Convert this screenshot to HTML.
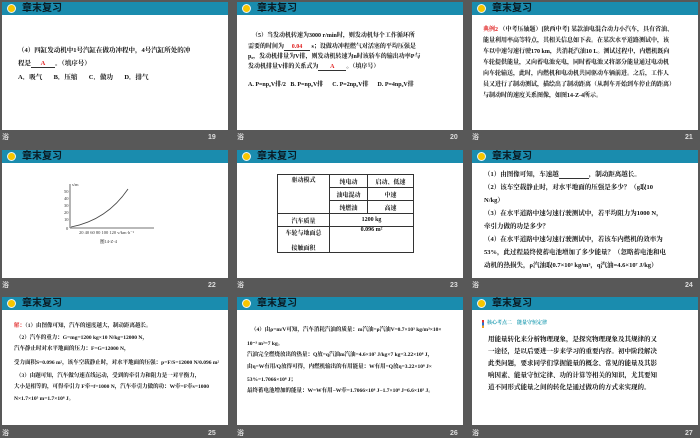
<!DOCTYPE html>
<html><head><meta charset="utf-8"><style>
*{margin:0;padding:0;box-sizing:border-box}
body{width:700px;height:438px;background:#585858;position:relative;overflow:hidden;font-family:"Liberation Serif","Noto Serif CJK SC","Noto Sans CJK SC",serif;color:#111}
.s{position:absolute;width:226px;height:128px;background:#fff;overflow:hidden}
.h{position:absolute;left:0;top:0;width:100%;height:13px;background:#1a8cae}
.h i{position:absolute;left:5px;top:2px;width:9px;height:9px;border-radius:50%;background:#f7c600;border:1px solid #e8f4f8}
.h b{position:absolute;left:20px;top:0px;font:bold 10px/13px "Liberation Sans","Noto Sans CJK SC",sans-serif;color:#0a1a22}
.t{position:absolute;font-weight:bold;font-size:6px;line-height:6px;white-space:nowrap}
.l{position:absolute;color:#ddd;font:bold 7px/8px "Liberation Sans","Noto Sans CJK SC",sans-serif}
.r{color:#e02020}
.u{display:inline-block;border-bottom:0.6px solid #333;text-align:center}
table{position:absolute;border-collapse:collapse;font-weight:bold;font-size:6px}
td{border:0.8px solid #333;text-align:center;height:13px;padding:0 2px}
</style></head><body>

<!-- 19 -->
<div class="s" style="left:2px;top:2px"><div class="h"><i></i><b>章末复习</b></div>
<div class="t" style="left:16px;top:46px;font-size:6.5px">（4）四缸发动机中1号汽缸在做功冲程中，4号汽缸所处的冲</div>
<div class="t" style="left:16px;top:59px;font-size:6.5px">程是<span class="u r" style="width:24px">A</span>。（填序号）</div>
<div class="t" style="left:16px;top:73px;font-size:6.5px">A．吸气&nbsp;&nbsp;&nbsp;&nbsp;&nbsp;&nbsp;&nbsp;B．压缩&nbsp;&nbsp;&nbsp;&nbsp;&nbsp;&nbsp;&nbsp;C．做功&nbsp;&nbsp;&nbsp;&nbsp;&nbsp;&nbsp;&nbsp;D．排气</div>
</div>
<div class="l" style="left:2px;top:134px">浴</div><div class="l" style="left:208px;top:134px">19</div>

<!-- 20 -->
<div class="s" style="left:237px;top:2px"><div class="h"><i></i><b>章末复习</b></div>
<div class="t" style="left:15px;top:31px">（5）当发动机转速为3000 r/min时，则发动机每个工作循环所</div>
<div class="t" style="left:11px;top:42px">需要的时间为<span class="u r" style="width:26px">0.04</span> s；设做功冲程燃气对活塞的平均压强是</div>
<div class="t" style="left:11px;top:52px">p₀，发动机排量为V排，则发动机转速为n时该轿车的输出功率P与</div>
<div class="t" style="left:11px;top:62px">发动机排量V排的关系式为<span class="u r" style="width:28px">A</span>。（填序号）</div>
<div class="t" style="left:11px;top:80px">A. P=np₀V排/2&nbsp;&nbsp;&nbsp;B. P=np₀V排&nbsp;&nbsp;&nbsp;&nbsp;&nbsp;&nbsp;C. P=2np₀V排&nbsp;&nbsp;&nbsp;&nbsp;&nbsp;&nbsp;D. P=4np₀V排</div>
</div>
<div class="l" style="left:237px;top:134px">浴</div><div class="l" style="left:450px;top:134px">20</div>

<!-- 21 -->
<div class="s" style="left:472px;top:2px"><div class="h"><i></i><b>章末复习</b></div>
<div class="t" style="left:11px;top:25px"><span class="r">典例2</span> （中考压轴题）[陕西中考] 某款油电混合动力小汽车，具有省油、</div>
<div class="t" style="left:11px;top:36px">能量利用率高等特点，其相关信息如下表。在某次水平道路测试中，该</div>
<div class="t" style="left:11px;top:47px">车以中速匀速行驶170 km，共消耗汽油10 L。测试过程中，内燃机既向</div>
<div class="t" style="left:11px;top:58px">车轮提供能量，又向蓄电池充电，同时蓄电池又将部分能量通过电动机</div>
<div class="t" style="left:11px;top:69px">向车轮输送，此时，内燃机和电动机共同驱动车辆前进。之后，工作人</div>
<div class="t" style="left:11px;top:80px">员又进行了制动测试，描绘出了制动距离（从刹车开始到车停止的距离）</div>
<div class="t" style="left:11px;top:91px">与制动时的速度关系图像，如图14-Z-4所示。</div>
</div>
<div class="l" style="left:472px;top:134px">浴</div><div class="l" style="left:685px;top:134px">21</div>

<!-- 22 -->
<div class="s" style="left:2px;top:150px"><div class="h"><i></i><b>章末复习</b></div>
<svg style="position:absolute;left:0;top:0" width="226" height="128">
<g stroke="#444" stroke-width="0.8" fill="none">
<line x1="68" y1="78" x2="68" y2="34"/><line x1="68" y1="78" x2="152" y2="78"/>
<path d="M69 77 Q105 70 126 39"/>
</g>
<g font-size="4.5" fill="#333" font-family="Liberation Serif">
<text x="70" y="36">s/m</text>
<text x="62" y="43">50</text><text x="62" y="50">40</text><text x="62" y="57">30</text><text x="62" y="64">20</text><text x="62" y="71">10</text><text x="64" y="80">0</text>
<text x="77" y="84">20   40   60   80  100  120 v/km·h⁻¹</text>
<text x="98" y="93">图14-Z-4</text>
</g></svg>
</div>
<div class="l" style="left:2px;top:282px">浴</div><div class="l" style="left:208px;top:282px">22</div>

<!-- 23 -->
<div class="s" style="left:237px;top:150px"><div class="h"><i></i><b>章末复习</b></div>
<table style="left:40px;top:24px;width:137px">
<tr><td rowspan="3" style="vertical-align:top;width:52px">驱动模式</td><td>纯电动</td><td>启动、低速</td></tr>
<tr><td>油电混动</td><td>中速</td></tr>
<tr><td>纯燃油</td><td>高速</td></tr>
<tr><td>汽车质量</td><td colspan="2">1200 kg</td></tr>
<tr><td style="height:26px">车轮与地面总<br><br>接触面积</td><td colspan="2" style="vertical-align:top">0.096 m²</td></tr>
</table>
</div>
<div class="l" style="left:237px;top:282px">浴</div><div class="l" style="left:450px;top:282px">23</div>

<!-- 24 -->
<div class="s" style="left:472px;top:150px"><div class="h"><i></i><b>章末复习</b></div>
<div class="t" style="left:12px;top:22px;font-size:6.5px">（1）由图像可知，车速越<span class="u" style="width:30px">&nbsp;</span>，制动距离越长。</div>
<div class="t" style="left:12px;top:35px;font-size:6.5px">（2）该车空载静止时，对水平地面的压强是多少？（g取10</div>
<div class="t" style="left:12px;top:48px;font-size:6.5px">N/kg）</div>
<div class="t" style="left:12px;top:61px;font-size:6.5px">（3）在水平道路中速匀速行驶测试中，若平均阻力为1000 N，</div>
<div class="t" style="left:12px;top:74px;font-size:6.5px">牵引力做的功是多少？</div>
<div class="t" style="left:12px;top:87px;font-size:6.5px">（4）在水平道路中速匀速行驶测试中，若该车内燃机的效率为</div>
<div class="t" style="left:12px;top:100px;font-size:6.5px">53%，此过程最终使蓄电池增加了多少能量？（忽略蓄电池和电</div>
<div class="t" style="left:12px;top:113px;font-size:6.5px">动机的热损失，ρ汽油取0.7×10³ kg/m³，q汽油=4.6×10⁷ J/kg）</div>
</div>
<div class="l" style="left:472px;top:282px">浴</div><div class="l" style="left:685px;top:282px">24</div>

<!-- 25 -->
<div class="s" style="left:2px;top:297px"><div class="h"><i></i><b>章末复习</b></div>
<div class="t" style="left:12px;top:26px;font-size:5.5px"><span class="r">解：</span>（1）由图像可知，汽车的速度越大，制动距离越长。</div>
<div class="t" style="left:14px;top:38px;font-size:5.5px">（2）汽车的重力：G=mg=1200 kg×10 N/kg=12000 N，</div>
<div class="t" style="left:12px;top:49px;font-size:5.5px">汽车静止时对水平地面的压力：F=G=12000 N，</div>
<div class="t" style="left:12px;top:63px;font-size:5.5px">受力面积S=0.096 m²，该车空载静止时，对水平地面的压强：p=F/S=12000 N/0.096 m²</div>
<div class="t" style="left:14px;top:76px;font-size:5.5px">（3）由题可知，汽车做匀速直线运动，受到的牵引力和阻力是一对平衡力，</div>
<div class="t" style="left:12px;top:87px;font-size:5.5px">大小是相等的，可得牵引力 F牵=f=1000 N，汽车牵引力做的功：W牵=F牵s=1000</div>
<div class="t" style="left:12px;top:99px;font-size:5.5px">N×1.7×10⁵ m=1.7×10⁸ J。</div>
</div>
<div class="l" style="left:2px;top:430px">浴</div><div class="l" style="left:208px;top:430px">25</div>

<!-- 26 -->
<div class="s" style="left:237px;top:297px"><div class="h"><i></i><b>章末复习</b></div>
<div class="t" style="left:14px;top:30px;font-size:5.5px">（4）由ρ=m/V可知，汽车消耗汽油的质量：m汽油=ρ汽油V=0.7×10³ kg/m³×10×</div>
<div class="t" style="left:10px;top:44px;font-size:5.5px">10⁻³ m³=7 kg。</div>
<div class="t" style="left:10px;top:55px;font-size:5.5px">汽油完全燃烧放出的热量：Q放=q汽油m汽油=4.6×10⁷ J/kg×7 kg=3.22×10⁸ J，</div>
<div class="t" style="left:10px;top:67px;font-size:5.5px">由η=W有用/Q放得可得，内燃机输出的有用能量：W有用=Q放η=3.22×10⁸ J×</div>
<div class="t" style="left:10px;top:80px;font-size:5.5px">53%=1.7066×10⁸ J；</div>
<div class="t" style="left:10px;top:91px;font-size:5.5px">最终蓄电池增加的能量：W=W有用−W牵=1.7066×10⁸ J−1.7×10⁸ J=6.6×10⁵ J。</div>
</div>
<div class="l" style="left:237px;top:430px">浴</div><div class="l" style="left:450px;top:430px">26</div>

<!-- 27 -->
<div class="s" style="left:472px;top:297px"><div class="h"><i></i><b>章末复习</b></div>
<div style="position:absolute;left:10px;top:23px;width:2px;height:8px;background:linear-gradient(#e03030 0 33%,#2a6fd0 33% 66%,#f0a020 66%)"></div>
<div class="t" style="left:15px;top:24px;font-size:5px;color:#1a9ab0">核心考点二　能量守恒定律</div>
<div class="t" style="left:16px;top:40px;font-size:6.5px">用能量转化来分析物理现象，是探究物理现象及其规律的又</div>
<div class="t" style="left:16px;top:52px;font-size:6.5px">一途径，是以后要进一步来学习的重要内容。初中阶段解决</div>
<div class="t" style="left:16px;top:64px;font-size:6.5px">此类问题，要求同学们掌握能量的概念、常见的能量及其影</div>
<div class="t" style="left:16px;top:76px;font-size:6.5px">响因素、能量守恒定律、功的计算等相关的知识，尤其要知</div>
<div class="t" style="left:16px;top:88px;font-size:6.5px">道不同形式能量之间的转化是通过做功的方式来实现的。</div>
</div>
<div class="l" style="left:472px;top:430px">浴</div><div class="l" style="left:685px;top:430px">27</div>

</body></html>
